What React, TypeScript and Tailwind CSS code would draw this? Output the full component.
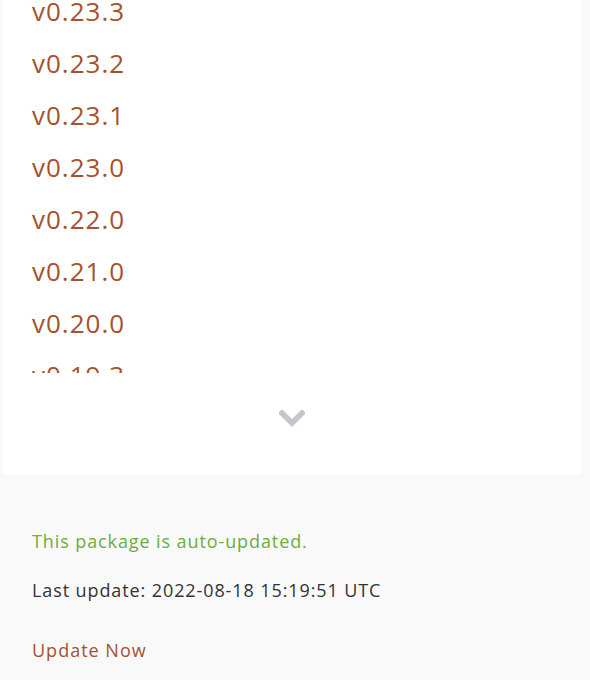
const versions = ['v0.23.4', 'v0.23.3', 'v0.23.2', 'v0.23.1', 'v0.23.0', 'v0.22.0', 'v0.21.0', 'v0.20.0', 'v0.19.3', 'v0.19.2']

export default function App() {
  return (
    <div
      className="min-h-screen w-[590px] bg-[#f9f9f9] text-[#333]"
      style={{ fontFamily: '"Open Sans", "Liberation Sans", sans-serif' }}
    >
      {/* Versions card */}
      <div className="ml-[2px] w-[580px] rounded-b bg-white">
        <div className="h-[373px] overflow-hidden">
          <ul className="-mt-[67px] pl-[30px]">
            {versions.map((v) => (
              <li key={v} className="h-[52px] text-[26px] leading-[52px] tracking-[1px] text-[#a5522c]">
                <a href="#">{v}</a>
              </li>
            ))}
          </ul>
        </div>
        <div className="flex h-[102px] justify-center pt-[37px]">
          <svg width="26" height="19" viewBox="0 0 26 19">
            <polyline
              points="3,3 13,13 23,3"
              fill="none"
              stroke="#c3c6ca"
              strokeWidth="5.5"
              strokeLinecap="square"
            />
          </svg>
        </div>
      </div>

      {/* Update info */}
      <div className="pl-[32px] pt-[53px] text-[18px] leading-[26px] tracking-[0.9px]">
        <p className="text-[#6eac3d]">This package is auto-updated.</p>
        <p className="mt-[23px]">Last update: 2022-08-18 15:19:51 UTC</p>
        <p className="mt-[34px]">
          <a href="#" className="text-[#a5522c] tracking-[1px]">Update Now</a>
        </p>
      </div>
    </div>
  )
}
